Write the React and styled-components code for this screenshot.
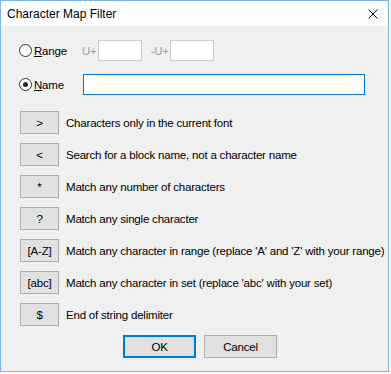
import styled, { createGlobalStyle } from "styled-components";

const GlobalStyle = createGlobalStyle`
  html, body {
    margin: 0;
    background: #ffffff;
  }
  body {
    font-family: "Liberation Sans", Arial, sans-serif;
    font-size: 11.5px;
    letter-spacing: -0.2px;
    color: #000;
  }
`;

const patterns = [
  { key: ">", text: "Characters only in the current font" },
  { key: "<", text: "Search for a block name, not a character name" },
  { key: "*", text: "Match any number of characters" },
  { key: "?", text: "Match any single character" },
  { key: "[A-Z]", text: "Match any character in range (replace 'A' and 'Z' with your range)" },
  { key: "[abc]", text: "Match any character in set (replace 'abc' with your set)" },
  { key: "$", text: "End of string delimiter" },
];

const CloseIcon = () => (
  <svg width="10" height="10" viewBox="0 0 10 10">
    <path d="M0.5 0.5 L9.5 9.5 M9.5 0.5 L0.5 9.5" stroke="#000" strokeWidth="1" fill="none" />
  </svg>
);

const App = () => (
  <>
    <GlobalStyle />
    <Window>
      <TitleBar>
        <Title>Character Map Filter</Title>
        <CloseIcon />
      </TitleBar>
      <Client>
        <Row $mt={14}>
          <RadioLabel $w={63}>
            <Radio />
            <span><u>R</u>ange</span>
          </RadioLabel>
          <Muted>U+</Muted>
          <CodeBox />
          <Muted $ml={9}>-U+</Muted>
          <CodeBox />
        </Row>
        <Row $mt={13}>
          <RadioLabel $w={64}>
            <Radio $checked />
            <span><u>N</u>ame</span>
          </RadioLabel>
          <NameInput />
        </Row>
        <Patterns>
          {patterns.map((p) => (
            <PatternRow key={p.key}>
              <KeyButton>{p.key}</KeyButton>
              <span>{p.text}</span>
            </PatternRow>
          ))}
        </Patterns>
        <Footer>
          <DialogButton $default>OK</DialogButton>
          <DialogButton>Cancel</DialogButton>
        </Footer>
      </Client>
    </Window>
  </>
);

export default App;

const Window = styled.div`
  width: 387px;
  height: 370px;
  border: 1px solid #7db5ea;
  background: #f0f0f0;
  display: flex;
  flex-direction: column;
`;

const TitleBar = styled.div`
  height: 25px;
  background: #ffffff;
  display: flex;
  align-items: center;
  justify-content: space-between;
  padding: 0 10px 0 6px;
`;

const Title = styled.div`
  font-size: 12px;
  letter-spacing: 0;
  padding-top: 1px;
`;

const Client = styled.div`
  flex: 1;
  display: flex;
  flex-direction: column;
  padding-left: 18px;
  white-space: nowrap;
`;

const Row = styled.div`
  display: flex;
  align-items: center;
  height: 21px;
  margin-top: ${(p) => p.$mt}px;
`;

const RadioLabel = styled.label`
  display: flex;
  align-items: center;
  gap: 2px;
  width: ${(p) => p.$w}px;
  flex: none;
`;

const Radio = styled.span`
  width: 11px;
  height: 11px;
  border: 1px solid #333333;
  border-radius: 50%;
  background: #ffffff;
  position: relative;
  flex: none;
  &::after {
    content: "";
    display: ${(p) => (p.$checked ? "block" : "none")};
    position: absolute;
    left: 3px;
    top: 3px;
    width: 5px;
    height: 5px;
    border-radius: 50%;
    background: #222222;
  }
`;

const Muted = styled.span`
  color: #a0a0a0;
  margin-left: ${(p) => p.$ml || 0}px;
  margin-right: 1px;
`;

const CodeBox = styled.div`
  width: 42px;
  height: 19px;
  border: 1px solid #cccccc;
  background: #ffffff;
`;

const NameInput = styled.div`
  width: 280px;
  height: 19px;
  border: 1px solid #0078d7;
  background: #ffffff;
`;

const Patterns = styled.div`
  display: flex;
  flex-direction: column;
  gap: 9px;
  margin-top: 16px;
  padding-left: 1px;
`;

const PatternRow = styled.div`
  display: flex;
  align-items: center;
  gap: 7px;
`;

const KeyButton = styled.div`
  width: 37px;
  height: 21px;
  border: 1px solid #adadad;
  background: #e1e1e1;
  display: flex;
  align-items: center;
  justify-content: center;
  flex: none;
`;

const Footer = styled.div`
  display: flex;
  gap: 8px;
  margin-top: 9px;
  padding-left: 104px;
`;

const DialogButton = styled.div`
  box-sizing: border-box;
  width: 73px;
  height: 23px;
  border: ${(p) => (p.$default ? "2px solid #0078d7" : "1px solid #adadad")};
  background: #e1e1e1;
  display: flex;
  align-items: center;
  justify-content: center;
`;
